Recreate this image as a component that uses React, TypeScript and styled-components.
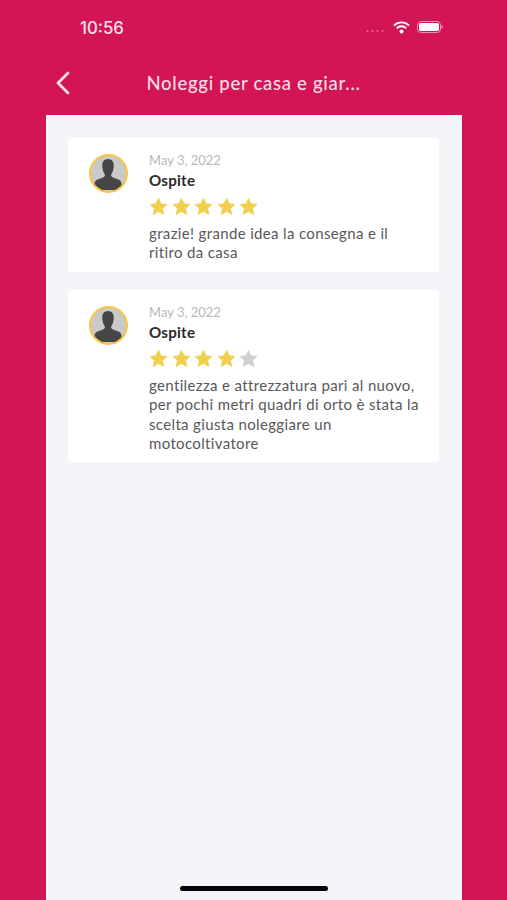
import React from "react";
import styled, { createGlobalStyle } from "styled-components";

const Global = createGlobalStyle`
  html, body { margin: 0; padding: 0; background: #d31556; }
  * { box-sizing: border-box; }
`;

const Screen = styled.div`
  width: 507px;
  height: 900px;
  background: #d31556;
  display: flex;
  flex-direction: column;
  position: relative;
  overflow: hidden;
  font-family: Lato, "Open Sans", sans-serif;
`;

const StatusBar = styled.div`
  height: 55px;
  display: flex;
  align-items: center;
  padding: 0 64px 1px 80px;
  color: #fbe3ec;
`;

const Time = styled.div`
  font-family: Inter, sans-serif;
  font-size: 16.8px;
  font-weight: 500;
  line-height: 20px;
  padding-top: 1px;
  flex: 1;
`;

const StatusIcons = styled.div`
  display: flex;
  align-items: center;
  gap: 7px;
`;

const Header = styled.div`
  height: 60px;
  display: grid;
  grid-template-columns: 101px 1fr 101px;
  align-items: center;
  padding-bottom: 4px;
`;

const Back = styled.div`
  padding-left: 55px;
  display: flex;
  align-items: center;
  height: 26px;
`;

const Title = styled.div`
  text-align: center;
  color: #fbdde8;
  font-size: 18.5px;
  font-weight: 500;
  letter-spacing: 0.72px;
  line-height: 24px;
  white-space: nowrap;
`;

const Panel = styled.div`
  flex: 1;
  margin: 0 45px 0 46px;
  background: #f3f5f9;
  padding: 23px 23px 0 22px;
  display: flex;
  flex-direction: column;
  gap: 18px;
`;

const Card = styled.div`
  background: #ffffff;
  border-radius: 4px;
  padding: 13px 19px 9px 21px;
  display: flex;
  gap: 21px;
`;

const Avatar = styled.div`
  width: 39px;
  height: 39px;
  margin-top: 3px;
  border-radius: 50%;
  border: 2.5px solid #f7c63e;
  background: #c9c9c9;
  overflow: hidden;
  flex: none;
`;

const Body = styled.div`
  flex: 1;
  min-width: 0;
`;

const DateText = styled.div`
  color: #b9b9b9;
  font-size: 13px;
  line-height: 18px;
`;

const Name = styled.div`
  color: #2b2b2b;
  font-size: 15.2px;
  font-weight: 700;
  line-height: 20px;
  margin-top: 1px;
  letter-spacing: 0.2px;
`;

const Stars = styled.div`
  display: flex;
  gap: 3.5px;
  margin-top: 7px;
  height: 19px;
`;

const Comment = styled.div`
  color: #58585a;
  font-size: 15px;
  line-height: 19.4px;
  letter-spacing: 0.35px;
  margin-top: 8px;
`;

const HomeBar = styled.div`
  position: absolute;
  left: 180px;
  bottom: 9px;
  width: 148px;
  height: 5px;
  border-radius: 3px;
  background: #050505;
`;

const Star = ({ on }: { on: boolean }) => (
  <svg width="19" height="19" viewBox="0 0 24 24">
    <path
      d="M12 1.6l3.2 6.9 7.5.9-5.5 5.1 1.5 7.5L12 18.3l-6.7 3.7 1.500-7.500L1.300 9.400l7.500-.9z"
      fill={on ? "#f0d04f" : "#cfcfcf"}
      stroke={on ? "#f0d04f" : "#cfcfcf"}
      strokeWidth="1"
      strokeLinejoin="round"
    />
  </svg>
);

const Silhouette = () => (
  <svg width="34" height="34" viewBox="0 0 34 34" style={{ display: "block" }}>
    <path
      d="M17 3c3.800 0 5.800 2.800 5.800 6.500 0 3.500-1 6.500-2.400 8.500-.7 1.100-.2 2.600 1 3.200 2 1 5.500 1.700 7.300 3 1.500 1.100 2.300 3.300 2.300 9.800H3c0-6.500.8-8.700 2.300-9.800 1.800-1.300 5.300-2 7.300-3 1.200-.6 1.700-2.100 1-3.200-1.400-2-2.400-5-2.400-8.500C11.200 5.800 13.200 3 17 3z"
      fill="#454545"
    />
  </svg>
);

const reviews = [
  { rating: 5, text: "grazie! grande idea la consegna e il ritiro da casa" },
  {
    rating: 4,
    text: "gentilezza e attrezzatura pari al nuovo, per pochi metri quadri di orto è stata la scelta giusta noleggiare un motocoltivatore",
  },
];

export default function App() {
  return (
    <Screen>
      <Global />
      <StatusBar>
        <Time>10:56</Time>
        <StatusIcons>
          <svg width="20" height="12" viewBox="0 0 20 12">
            {[0, 5, 10, 15].map((x) => (
              <circle key={x} cx={x + 1.5} cy="10" r="1" fill="#e86d97" />
            ))}
          </svg>
          <svg width="17" height="13" viewBox="0 0 17 13">
            <path d="M1 4.500a10.500 10.500 0 0 1 15 0" fill="none" stroke="#fff" strokeWidth="1.900" />
            <path d="M3.800 7.300a6.500 6.500 0 0 1 9.400 0" fill="none" stroke="#fff" strokeWidth="1.900" />
            <circle cx="8.500" cy="10.600" r="2" fill="#fff" />
          </svg>
          <svg width="26" height="14" viewBox="0 0 26 14">
            <rect x="0.500" y="1.500" width="23" height="11" rx="3.500" fill="none" stroke="#ee8fb0" />
            <rect x="2" y="3" width="20" height="8" rx="2" fill="#fff" />
            <rect x="24.300" y="5.500" width="1.500" height="3" rx="0.700" fill="#ee8fb0" />
          </svg>
        </StatusIcons>
      </StatusBar>
      <Header>
        <Back>
          <svg width="15" height="24" viewBox="0 0 15 24">
            <path d="M13 2L3 12l10 10" fill="none" stroke="#fbe3ec" strokeWidth="2.800" strokeLinecap="round" strokeLinejoin="round" />
          </svg>
        </Back>
        <Title>Noleggi per casa e giar...</Title>
        <div />
      </Header>
      <Panel>
        {reviews.map((r, i) => (
          <Card key={i}>
            <Avatar>
              <Silhouette />
            </Avatar>
            <Body>
              <DateText>May 3, 2022</DateText>
              <Name>Ospite</Name>
              <Stars>
                {[1, 2, 3, 4, 5].map((n) => (
                  <Star key={n} on={n <= r.rating} />
                ))}
              </Stars>
              <Comment>{r.text}</Comment>
            </Body>
          </Card>
        ))}
      </Panel>
      <HomeBar />
    </Screen>
  );
}
